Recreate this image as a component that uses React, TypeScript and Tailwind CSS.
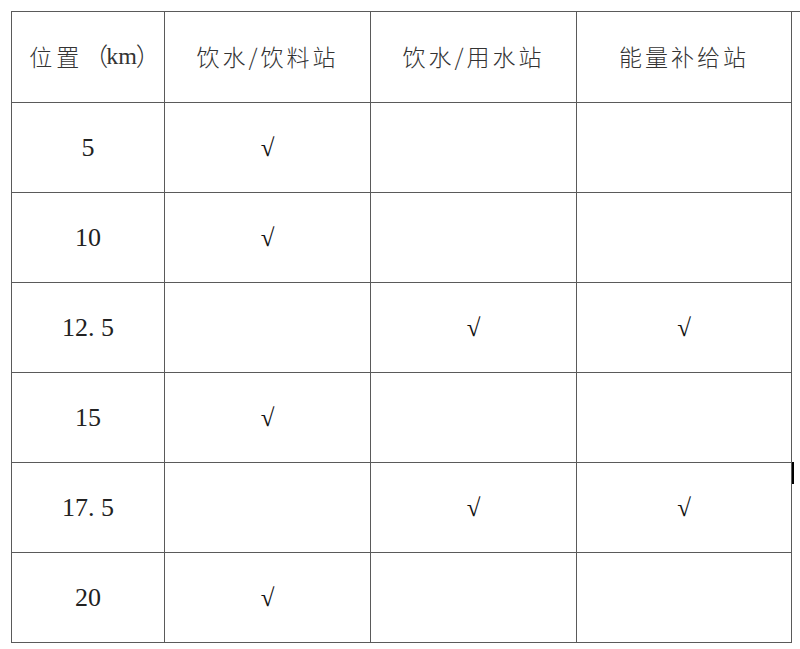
import React from "react";

const headers = ["位置（km）", "饮水/饮料站", "饮水/用水站", "能量补给站"];
const rows: [string, boolean, boolean, boolean][] = [
  ["5", true, false, false],
  ["10", true, false, false],
  ["12. 5", false, true, true],
  ["15", true, false, false],
  ["17. 5", false, true, true],
  ["20", true, false, false],
];

const cjk = { fontFamily: '"Noto Sans CJK SC", "Noto Sans", sans-serif' };
const serif = { fontFamily: '"Liberation Serif", "Noto Sans CJK SC", serif' };

function Check() {
  return (
    <span className="text-[25px] text-[#111] leading-none" style={serif}>
      √
    </span>
  );
}

export default function App() {
  return (
    <div className="relative w-[800px] h-[649px] bg-white overflow-hidden">
      <div className="pt-[11px] pl-[11px]">
        <div className="grid grid-cols-[153px_206px_206px_215px] grid-rows-[91px_90px_90px_90px_90px_90px_90px] border-l border-t border-[#5a5a5a]">
          {headers.map((h, i) => (
            <div
              key={h}
              className="flex items-center justify-center border-r border-b border-[#5a5a5a] text-[23px] tracking-[3px] text-[#333] font-light pb-[2px]"
              style={cjk}
            >
              {i === 0 ? (
                <span className="flex items-center pl-[14px] tracking-normal">
                  <span className="tracking-[4px]">位置</span>
                  <span className="text-[25px]">（</span>
                  <span className="text-[24px] -ml-[2px]" style={serif}>km</span>
                  <span className="text-[25px] -ml-[1px]">）</span>
                </span>
              ) : (
                h
              )}
            </div>
          ))}
          {rows.map((r) => (
            <React.Fragment key={r[0]}>
              <div
                className="flex items-center justify-center border-r border-b border-[#5a5a5a] text-[26px] text-[#222]"
                style={serif}
              >
                {r[0]}
              </div>
              {[r[1], r[2], r[3]].map((c, j) => (
                <div
                  key={j}
                  className="flex items-center justify-center border-r border-b border-[#5a5a5a]"
                >
                  {c ? <Check /> : null}
                </div>
              ))}
            </React.Fragment>
          ))}
        </div>
      </div>
      <div className="absolute left-[792px] top-[462px] w-[2px] h-[22px] bg-black" />
    </div>
  );
}
